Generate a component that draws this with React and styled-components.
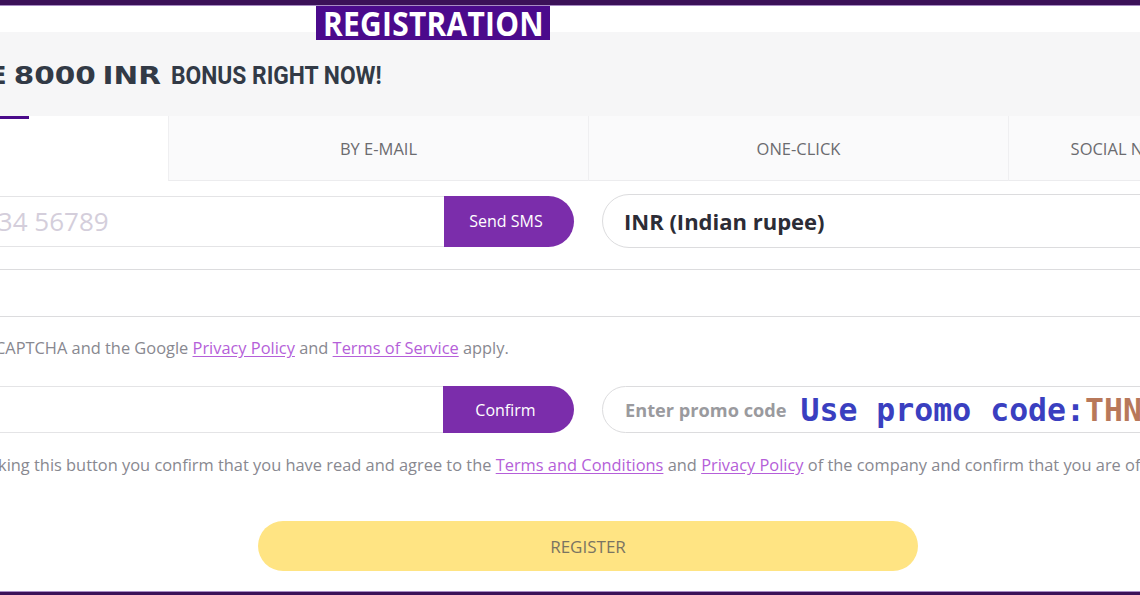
import React from "react";
import styled, { createGlobalStyle } from "styled-components";

const Global = createGlobalStyle`
  html, body { margin: 0; padding: 0; overflow: hidden; background: #fff; }
  body { font-family: "Open Sans", "Liberation Sans", sans-serif; width: 1140px; height: 595px; }
  * { box-sizing: border-box; }
`;

const Page = styled.div`
  position: relative;
  width: 1140px;
  height: 595px;
  overflow: hidden;
  display: flex;
  flex-direction: column;
`;

const TopBar = styled.div`
  height: 6px;
  background: #3b1158;
  border-bottom: 1px solid #a88cc4;
  flex-shrink: 0;
`;

const Badge = styled.div`
  position: absolute;
  left: 316px;
  top: 6px;
  width: 234px;
  height: 34px;
  background: #4b0a8c;
  color: #fff;
  font-family: "Open Sans", sans-serif;
  font-weight: 700;
  font-size: 34px;
  line-height: 34px;
  display: flex;
  align-items: center;
  justify-content: center;
  overflow: hidden;
  z-index: 2;
`;

const BadgeText = styled.span`
  display: inline-block;
  transform: scaleX(0.88);
  letter-spacing: 0.3px;
`;

const Container = styled.div`
  width: 1680px;
  margin-left: -252px;
  margin-top: 26px;
  display: flex;
  flex-direction: column;
  flex-shrink: 0;
`;

const Hero = styled.div`
  height: 84px;
  background: #f6f6f7;
  display: flex;
  align-items: center;
  padding-left: ${(p) => p.$indent}px;
`;

const HeroLine = styled.div`
  display: flex;
  align-items: baseline;
  color: #323a46;
  white-space: nowrap;
`;

const Wide = styled.span`
  display: inline-block;
  font-family: "DejaVu Sans", sans-serif;
  font-weight: 700;
  font-size: 25px;
  word-spacing: -3px;
  transform: scaleX(1.18);
  transform-origin: right center;
`;

const Condensed = styled.span`
  display: inline-block;
  margin-left: 10px;
  font-family: Roboto, "Liberation Sans", sans-serif;
  font-weight: 700;
  font-size: 26.5px;
  transform: scaleX(0.86);
  transform-origin: left center;
`;

const Tabs = styled.div`
  display: flex;
  height: 65px;
`;

const Tab = styled.div`
  position: relative;
  flex: 1;
  display: flex;
  align-items: center;
  justify-content: center;
  font-size: 16.5px;
  text-transform: uppercase;
  white-space: nowrap;
  color: ${(p) => (p.$active ? "#4a4a52" : "#6b6b6f")};
  background: ${(p) => (p.$active ? "#fff" : "#fafafb")};
  border-left: 1px solid ${(p) => (p.$active ? "#fff" : "#efeff1")};
  border-bottom: 1px solid ${(p) => (p.$active ? "#fff" : "#ececee")};
`;

const TabIndicator = styled.span`
  position: absolute;
  top: 0;
  left: 50%;
  width: 140px;
  margin-left: -70px;
  height: 3px;
  background: #4a0a8a;
`;

const TwoCols = styled.div`
  display: grid;
  grid-template-columns: 1fr 1fr;
  column-gap: 28px;
  align-items: center;
  margin-top: ${(p) => p.$mt}px;
  height: ${(p) => p.$h}px;
`;

const InputGroup = styled.div`
  display: flex;
  height: ${(p) => p.$h}px;
`;

const LineInput = styled.div`
  flex: 1;
  display: flex;
  align-items: center;
  border-top: 1px solid #e4e4e6;
  border-bottom: 1px solid #e4e4e6;
  padding-left: ${(p) => p.$pad || 20}px;
  font-size: 26px;
  color: #d4cedb;
  white-space: nowrap;
  overflow: hidden;
`;

const PurpleButton = styled.div`
  width: ${(p) => p.$w}px;
  background: #7b2dab;
  color: #fff;
  font-size: 16px;
  display: flex;
  align-items: center;
  justify-content: center;
  border-radius: 0 26px 26px 0;
  padding-right: 6px;
`;

const Pill = styled.div`
  height: ${(p) => p.$h}px;
  border: 1px solid #dcdcde;
  border-radius: ${(p) => p.$h / 2}px;
  display: flex;
  align-items: center;
  padding-left: ${(p) => p.$pad}px;
  white-space: nowrap;
  overflow: hidden;
`;

const SelectValue = styled.span`
  font-size: 22px;
  font-weight: 700;
  color: #2c2c36;
`;

const FullInput = styled.div`
  margin-top: 21px;
  height: 48px;
  border-top: 1px solid #dcdcde;
  border-bottom: 1px solid #dcdcde;
`;

const Note = styled.p`
  margin: ${(p) => p.$mt}px 0 0;
  padding-left: ${(p) => p.$indent}px;
  font-size: 16.4px;
  line-height: 24px;
  color: #888890;
  white-space: nowrap;
`;

const Link = styled.a`
  color: #b55fd9;
  text-decoration: underline;
  text-underline-offset: 2px;
`;

const PromoLabel = styled.span`
  font-size: 18.2px;
  font-weight: 700;
  color: #9a9a9e;
  margin-right: 14px;
`;

const PromoCode = styled.span`
  font-family: "DejaVu Sans Mono", "Liberation Mono", monospace;
  font-weight: 700;
  font-size: 31.5px;
  color: #3a3fc0;
`;

const PromoValue = styled.span`
  color: #b8785a;
`;

const RegisterRow = styled.div`
  margin-top: 44px;
  display: flex;
  justify-content: center;
`;

const RegisterButton = styled.div`
  width: 660px;
  height: 50px;
  border-radius: 25px;
  background: #ffe483;
  color: #7a7462;
  font-size: 17px;
  font-weight: 500;
  display: flex;
  align-items: center;
  justify-content: center;
`;

const BottomBar = styled.div`
  margin-top: auto;
  height: 4px;
  background: #3b1158;
  border-top: 1px solid #a88cc4;
  flex-shrink: 0;
`;

export default function App() {
  const tabs = ["By phone", "By e-mail", "One-click", "Social networks and messengers"];
  return (
    <>
      <Global />
      <Page>
        <TopBar />
        <Badge>
          <BadgeText>REGISTRATION</BadgeText>
        </Badge>
        <Container>
          <Hero $indent={167}>
            <HeroLine>
              <Wide>GET THE 8000 INR</Wide>
              <Condensed>BONUS RIGHT NOW!</Condensed>
            </HeroLine>
          </Hero>
          <Tabs>
            {tabs.map((t, i) => (
              <Tab key={t} $active={i === 0}>
                {i === 0 && <TabIndicator />}
                {t}
              </Tab>
            ))}
          </Tabs>
          <TwoCols $mt={13} $h={54}>
            <InputGroup $h={51}>
              <LineInput $pad={162}>+91 12 34 56789</LineInput>
              <PurpleButton $w={130}>Send SMS</PurpleButton>
            </InputGroup>
            <Pill $h={54} $pad={21}>
              <SelectValue>INR (Indian rupee)</SelectValue>
            </Pill>
          </TwoCols>
          <FullInput />
          <Note $mt={19} $indent={47}>
            This site is protected by reCAPTCHA and the Google <Link>Privacy Policy</Link> and{" "}
            <Link>Terms of Service</Link> apply.
          </Note>
          <TwoCols $mt={26} $h={47}>
            <InputGroup $h={47}>
              <LineInput />
              <PurpleButton $w={131}>Confirm</PurpleButton>
            </InputGroup>
            <Pill $h={47} $pad={22}>
              <PromoLabel>Enter promo code</PromoLabel>
              <PromoCode>
                Use promo code:<PromoValue>THNBET</PromoValue>
              </PromoCode>
            </Pill>
          </TwoCols>
          <Note $mt={20} $indent={203}>
            By clicking this button you confirm that you have read and agree to the{" "}
            <Link>Terms and Conditions</Link> and <Link>Privacy Policy</Link> of the company and confirm
            that you are of legal age
          </Note>
          <RegisterRow>
            <RegisterButton>REGISTER</RegisterButton>
          </RegisterRow>
        </Container>
        <BottomBar />
      </Page>
    </>
  );
}
